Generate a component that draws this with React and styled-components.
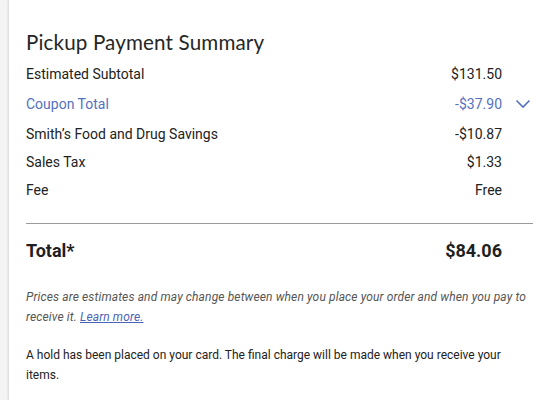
import React from "react";
import styled, { createGlobalStyle } from "styled-components";

const GlobalStyle = createGlobalStyle`
  html, body {
    margin: 0;
    padding: 0;
    background: #f4f4f4;
  }
  body {
    font-family: Roboto, "Liberation Sans", sans-serif;
    color: #2b2b2b;
  }
`;

const Page = styled.div`
  display: flex;
  min-height: 400px;
`;

const Gutter = styled.div`
  width: 9px;
  flex-shrink: 0;
  background: #f4f4f4;
`;

const Panel = styled.section`
  flex: 1;
  background: #fff;
  box-shadow: -1px 0 2px rgba(0, 0, 0, 0.12);
  padding: 29px 14px 0 17px;
`;

const Title = styled.h2`
  margin: 0 0 5px;
  font-family: Lato, "Noto Sans", sans-serif;
  font-weight: 400;
  font-size: 20.6px;
  letter-spacing: 0.15px;
  line-height: 26px;
  color: #262626;
`;

const Rows = styled.div`
  display: flex;
  flex-direction: column;
  padding-right: 31px;
`;

const Row = styled.div`
  display: flex;
  align-items: center;
  justify-content: space-between;
  height: ${(p) => (p.$tall ? 32 : 28)}px;
  font-size: 14px;
  color: ${(p) => (p.$accent ? "#5670c0" : "#222")};
  position: relative;
`;

const Toggle = styled.button`
  position: absolute;
  right: -31px;
  top: 50%;
  transform: translateY(-50%);
  border: 0;
  background: none;
  padding: 0;
  width: 20px;
  height: 20px;
  display: flex;
  align-items: center;
  justify-content: center;
  cursor: pointer;
`;

const Divider = styled.hr`
  border: 0;
  border-top: 1px solid #9a9a9a;
  margin: 19px 0 0;
`;

const TotalRow = styled.div`
  display: flex;
  justify-content: space-between;
  align-items: center;
  padding: 13px 31px 0 0;
  font-size: 18px;
  font-weight: 700;
  color: #1f1f1f;
  height: 26px;
`;

const Note = styled.p`
  margin: ${(p) => p.$top}px 0 0;
  font-size: 12px;
  line-height: 20px;
  font-style: ${(p) => (p.$italic ? "italic" : "normal")};
  letter-spacing: ${(p) => (p.$italic ? "0.13px" : "0")};
  color: ${(p) => (p.$italic ? "#555" : "#222")};
  padding-right: ${(p) => (p.$italic ? 0 : 4)}px;
`;

const Link = styled.a`
  color: #4a63b8;
  text-decoration: underline;
`;

const Chevron = () => (
  <svg width="16" height="10" viewBox="0 0 16 10" fill="none">
    <path d="M1.5 1.5 L8 8 L14.5 1.5" stroke="#5670c0" strokeWidth="1.6" />
  </svg>
);

const lines = [
  { label: "Estimated Subtotal", value: "$131.50" },
  { label: "Coupon Total", value: "-$37.90", accent: true, toggle: true },
  { label: "Smith\u2019s Food and Drug Savings", value: "-$10.87" },
  { label: "Sales Tax", value: "$1.33" },
  { label: "Fee", value: "Free" },
];

export default function App() {
  return (
    <Page>
      <GlobalStyle />
      <Gutter />
      <Panel>
        <Title>Pickup Payment Summary</Title>
        <Rows>
          {lines.map((l) => (
            <Row key={l.label} $accent={l.accent} $tall={l.toggle}>
              <span>{l.label}</span>
              <span>{l.value}</span>
              {l.toggle && (
                <Toggle aria-label="Show coupons">
                  <Chevron />
                </Toggle>
              )}
            </Row>
          ))}
        </Rows>
        <Divider />
        <TotalRow>
          <span>Total*</span>
          <span>$84.06</span>
        </TotalRow>
        <Note $italic $top={24}>
          Prices are estimates and may change between when you place your order
          and when you pay to receive it. <Link href="#">Learn more.</Link>
        </Note>
        <Note $top={18}>
          A hold has been placed on your card. The final charge will be made when
          you receive your items.
        </Note>
      </Panel>
    </Page>
  );
}
